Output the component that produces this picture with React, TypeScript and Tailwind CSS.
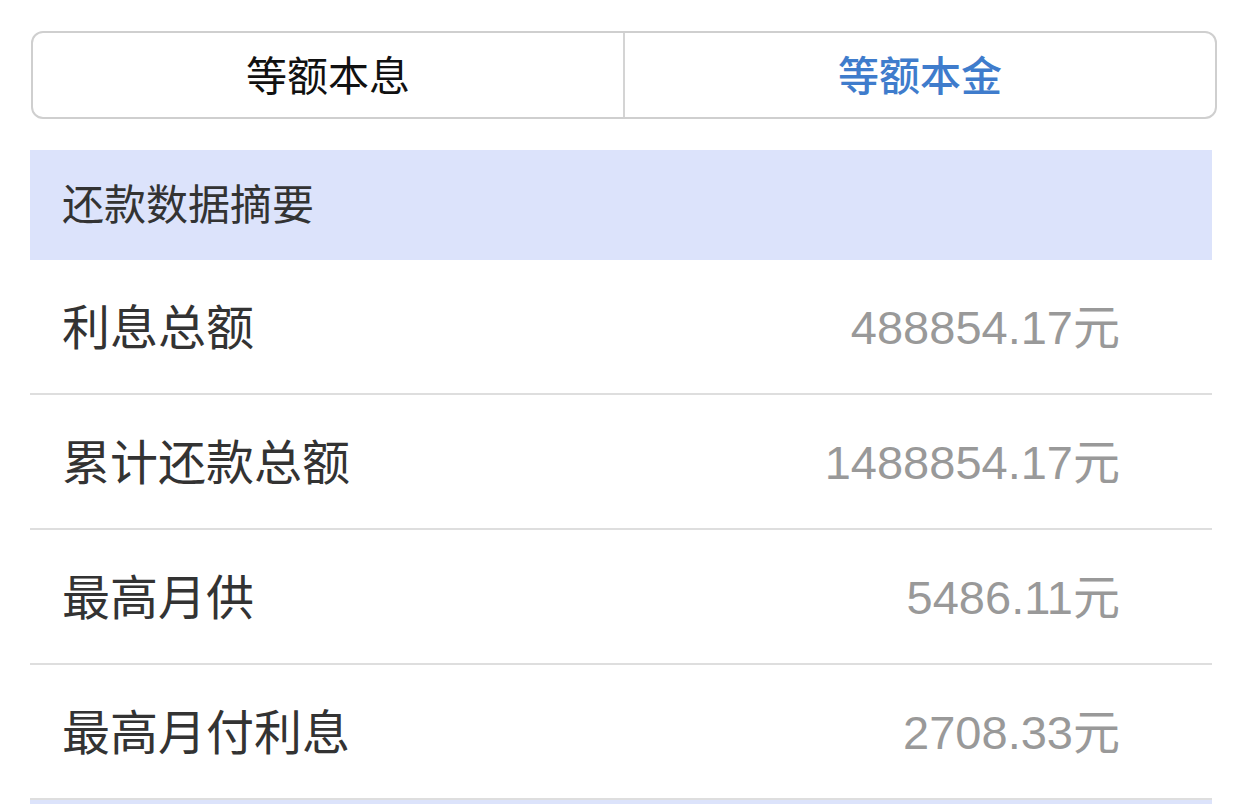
import React from "react";

const rows = [
  { label: "利息总额", value: "488854.17元" },
  { label: "累计还款总额", value: "1488854.17元" },
  { label: "最高月供", value: "5486.11元" },
  { label: "最高月付利息", value: "2708.33元" },
];

const font = { fontFamily: '"Liberation Sans", "Noto Sans CJK SC", sans-serif' };

const App = () => {
  return (
    <div className="w-[1242px] h-[804px] overflow-hidden bg-white" style={font}>
      {/* Tabs */}
      <div className="pt-[31px] pl-[31px] pr-[25px]">
        <div className="flex h-[88px] rounded-[12px] border-2 border-[#cfcfcf] overflow-hidden">
          <div className="flex-1 flex items-center justify-center pt-[5px] text-[41px] text-[#111]">
            等额本息
          </div>
          <div className="w-[2px] bg-[#d4d4d4]" />
          <div className="flex-1 flex items-center justify-center pt-[5px] text-[41px] font-medium text-[#3f7ccc]">
            等额本金
          </div>
        </div>
      </div>

      {/* Summary */}
      <div className="mt-[31px] mx-[30px]">
        <div className="h-[110px] bg-[#dce3fb] flex items-center pl-[32px] text-[42px] text-[#333]">
          还款数据摘要
        </div>
        {rows.map((row) => (
          <div
            key={row.label}
            className="h-[135px] border-b-2 border-[#dedede] flex items-center justify-between pt-[4px] pl-[32px] pr-[92px]"
          >
            <span className="text-[48px] text-[#333]">{row.label}</span>
            <span className="text-[47px] text-[#999]">{row.value}</span>
          </div>
        ))}
        <div className="h-[110px] bg-[#dce3fb]" />
      </div>
    </div>
  );
};

export default App;
